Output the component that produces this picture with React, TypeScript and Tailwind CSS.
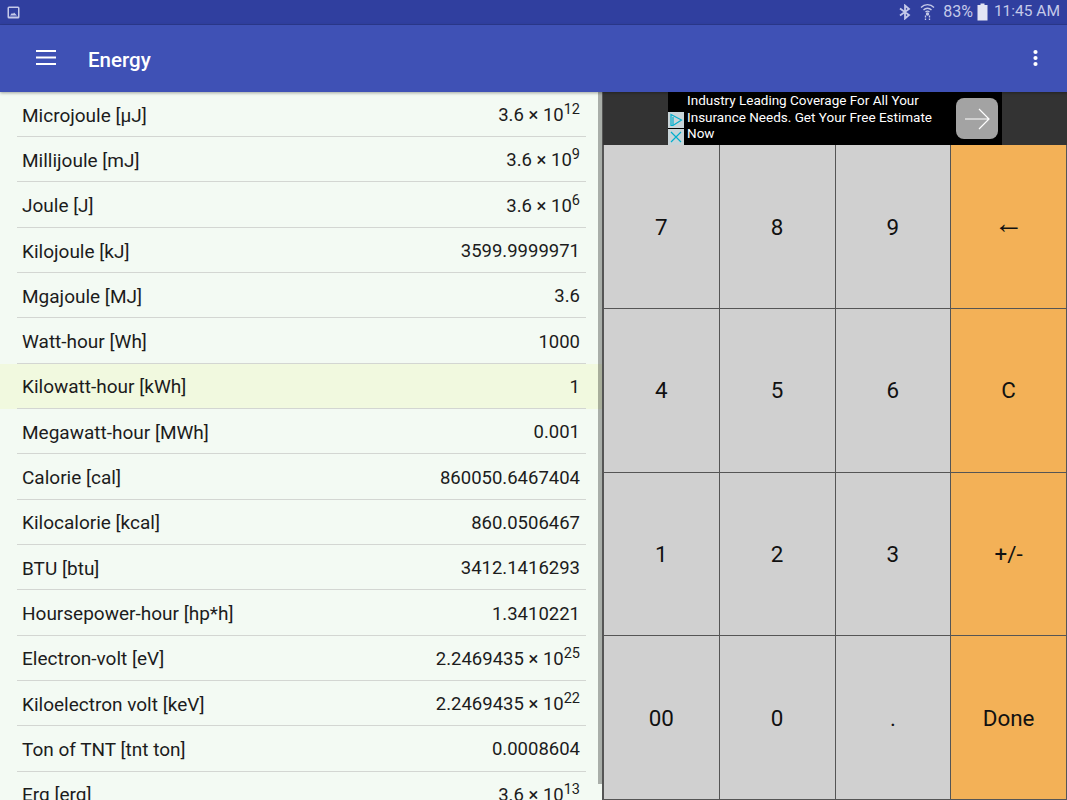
const rows: [string, string, string?, boolean?][] = [
  ["Microjoule [μJ]", "3.6 × 10", "12"],
  ["Millijoule [mJ]", "3.6 × 10", "9"],
  ["Joule [J]", "3.6 × 10", "6"],
  ["Kilojoule [kJ]", "3599.9999971"],
  ["Mgajoule [MJ]", "3.6"],
  ["Watt-hour [Wh]", "1000"],
  ["Kilowatt-hour [kWh]", "1", undefined, true],
  ["Megawatt-hour [MWh]", "0.001"],
  ["Calorie [cal]", "860050.6467404"],
  ["Kilocalorie [kcal]", "860.0506467"],
  ["BTU [btu]", "3412.1416293"],
  ["Hoursepower-hour [hp*h]", "1.3410221"],
  ["Electron-volt [eV]", "2.2469435 × 10", "25"],
  ["Kiloelectron volt [keV]", "2.2469435 × 10", "22"],
  ["Ton of TNT [tnt ton]", "0.0008604"],
  ["Erg [erg]", "3.6 × 10", "13"],
];

const keys: [string, boolean?][] = [
  ["7"], ["8"], ["9"], ["←", true],
  ["4"], ["5"], ["6"], ["C", true],
  ["1"], ["2"], ["3"], ["+/-", true],
  ["00"], ["0"], ["."], ["Done", true],
];

export default function App() {
  return (
    <div className="w-[1067px] h-[800px] overflow-hidden flex flex-col bg-[#f3faf3] font-['Roboto','Liberation_Sans',sans-serif] text-[#1c1c1c]">
      <div className="h-[25px] shrink-0 bg-[#303f9f] flex items-center justify-between pl-[7px] pr-[7px] text-[#c5cae9] text-[15.5px] border-b border-[#2c3a90]">
        <svg width="13" height="13" viewBox="0 0 13 13">
          <rect x="0.5" y="0.5" width="12" height="12" rx="1.5" fill="#c5cae9" />
          <rect x="2" y="2" width="9" height="8.5" fill="#303f9f" />
          <path d="M3 9.5 L5 7 L6 8 L7 6.5 L10 9.5 Z" fill="#c5cae9" />
        </svg>
        <div className="flex items-center">
          <svg width="12" height="16" viewBox="0 0 12 16" fill="none" stroke="#c5cae9" strokeWidth="1.8" className="mr-[9px]">
            <path d="M1 4.5 L10 11 L6 14.5 V1.5 L10 5 L1 11.5" />
          </svg>
          <svg width="15" height="18" viewBox="0 0 15 18" fill="none" stroke="#c5cae9" strokeWidth="1.3" className="mr-[8px]">
            <path d="M1 4.5 A9 9 0 0 1 14 4.5" />
            <path d="M3.5 7 A5.5 5.5 0 0 1 11.5 7" />
            <path d="M5.5 9 A3 3 0 0 1 9.5 9" />
            <circle cx="7.5" cy="11" r="1" fill="#c5cae9" />
            <path d="M5.5 12.5 V17 M9.5 12.5 V17" strokeDasharray="2 1" />
          </svg>
          <span className="leading-none text-[16px]">83%</span>
          <svg width="11" height="18" viewBox="0 0 11 18" className="ml-[4px] mr-[6px]">
            <path d="M3.5 0.5 H7.5 V2 H10.5 V17.5 H0.5 V2 H3.5 Z" fill="#e3e5f4" />
          </svg>
          <span className="leading-none">11:45 AM</span>
        </div>
      </div>

      <div className="h-[67px] shrink-0 bg-[#3f51b5] flex items-center pl-[36px] pr-[28px] shadow-[0_1px_3px_rgba(0,0,0,0.35)] relative">
        <svg width="20" height="15" viewBox="0 0 20 15" fill="white" className="mr-[32px] mb-[3px]">
          <rect y="0" width="20" height="2" />
          <rect y="6.5" width="20" height="2" />
          <rect y="13" width="20" height="2" />
        </svg>
        <span className="text-white text-[20.5px] font-medium pt-[4px]">Energy</span>
        <svg width="5" height="18" viewBox="0 0 5 18" fill="white" className="ml-auto mr-[1px] mb-[2px]">
          <circle cx="2.5" cy="3" r="2.1" />
          <circle cx="2.5" cy="9" r="2.1" />
          <circle cx="2.5" cy="15" r="2.1" />
        </svg>
      </div>

      <div className="flex-1 flex min-h-0">
        <div className="w-[602px] shrink-0 overflow-hidden relative">
          <div className="-mt-[0.4px]">
            {rows.map(([name, value, exp, active]) => (
              <div key={name} className={`h-[45.33px] ${active ? "bg-[#f1f9df]" : ""}`}>
                <div className="ml-[17px] mr-[16px] h-full border-b border-[#d3d6d2] flex items-center justify-between pl-[5px] pr-[6px] pt-[4px]">
                  <span className="text-[19px]">{name}</span>
                  <span className="text-[18.5px]">
                    {value}
                    {exp && <sup className="text-[14.5px] leading-none align-[7px] top-0">{exp}</sup>}
                  </span>
                </div>
              </div>
            ))}
          </div>
          <div className="absolute right-0 top-0 w-[4px] h-[692px] bg-black/30" />
        </div>
        <div className="flex-1 flex flex-col min-w-0 bg-[#333333] border-l border-[#555555]">
          <div className="h-[53px] shrink-0 flex">
            <div className="ml-[65px] w-[333.5px] bg-black flex relative">
              <div className="w-[16px] shrink-0 flex flex-col justify-end gap-[1px]">
                <div className="w-[16px] h-[16px] bg-[#c8d4d8] flex items-center justify-center">
                  <svg width="14" height="14" viewBox="0 0 14 14" fill="none" stroke="#00aecd" strokeWidth="1.2">
                    <path d="M2 1.5 L12.5 7 L4 12.5 H2 Z" />
                    <path d="M4 4 V12" />
                  </svg>
                </div>
                <div className="w-[16px] h-[16px] bg-[#c8d4d8] flex items-center justify-center">
                  <svg width="12" height="12" viewBox="0 0 12 12" fill="none" stroke="#00aecd" strokeWidth="1.2">
                    <path d="M1 1 L11 11 M11 1 L1 11" />
                  </svg>
                </div>
              </div>
              <div className="ml-[3px] w-[260px] text-white text-[13.5px] leading-[16.5px] whitespace-nowrap">
                Industry Leading Coverage For All Your<br />Insurance Needs. Get Your Free Estimate<br />Now
              </div>
              <div className="absolute right-[4px] top-[6px] w-[42px] h-[41px] rounded-[8px] bg-[#a3a3a3] flex items-center justify-center">
                <svg width="26" height="22" viewBox="0 0 26 22" fill="none" stroke="white" strokeWidth="1.2">
                  <path d="M1 11 H25 M15 1 L25 11 L15 21" />
                </svg>
              </div>
            </div>
          </div>
          <div className="flex-1 grid grid-cols-4 grid-rows-4 gap-px bg-[#555555] px-px pb-px">
            {keys.map(([k, op]) => (
              <div key={k} className={`flex items-center justify-center text-[#111] ${k === "←" ? "text-[30px] font-['Liberation_Sans'] pb-[8px]" : "text-[22.4px] pt-[2px]"} ${op ? "bg-[#f3b157]" : "bg-[#d0d0d0]"}`}>
                {k}
              </div>
            ))}
          </div>
        </div>
      </div>
    </div>
  );
}
